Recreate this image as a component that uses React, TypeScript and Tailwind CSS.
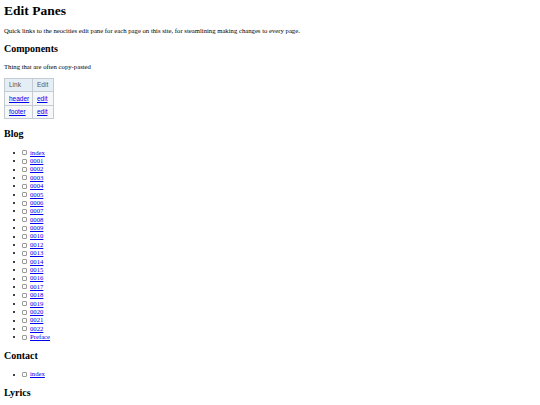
import React from "react";

const blog = ["index","0001","0002","0003","0004","0005","0006","0007","0008","0009","0010","0012","0013","0014","0015","0016","0017","0018","0019","0020","0021","0022","Preface"];

function Item({ label }: { label: string }) {
  return (
    <li className="flex items-center h-[8.4px] leading-[8.4px]">
      <span className="w-[2px] h-[2px] rounded-full bg-black ml-[-7px] mr-[5px]" />
      <span className="inline-block w-[5px] h-[5px] border border-[#9a9a9a] rounded-[1px] bg-white ml-[2px] mr-[3px]" />
      <a href="#" className="text-[#0000ee] underline">{label}</a>
    </li>
  );
}

export default function App() {
  return (
    <div className="bg-white h-[405px] overflow-hidden px-[4px] text-black text-[6.7px] antialiased" style={{ fontFamily: '"Liberation Serif", "Times New Roman", serif' }}>
      <h1 className="text-[13.5px] leading-[18px] font-bold pt-[2px]">Edit Panes</h1>
      <p className="leading-[10px] mt-[5.7px]">Quick links to the neocities edit pane for each page on this site, for steamlining making changes to every page.</p>
      <h2 className="text-[10px] leading-[14px] font-bold mt-[6.2px]">Components</h2>
      <p className="leading-[10px] mt-[5.8px]">Thing that are often copy-pasted</p>
      <table className="mt-[6.3px] border-collapse border border-[#a2a9b1] text-[6.5px] text-[#222]" style={{ fontFamily: '"Liberation Sans", Arial, sans-serif' }}>
        <thead>
          <tr className="h-[13.5px] bg-[#e5eef5]">
            <th className="border border-[#c4cbd2] font-normal text-left pl-[4px] pr-[4px] w-[28px] text-[#555]">Link</th>
            <th className="border border-[#c4cbd2] font-normal text-left pl-[4px] pr-[3px] w-[21px] text-[#555]">Edit</th>
          </tr>
        </thead>
        <tbody className="bg-[#f6f7f9]">
          <tr className="h-[13.3px]">
            <td className="border border-[#c4cbd2] pl-[4px]"><a href="#" className="text-[#0000ee] underline">header</a></td>
            <td className="border border-[#c4cbd2] pl-[4px]"><a href="#" className="text-[#0000ee] underline">edit</a></td>
          </tr>
          <tr className="h-[13.3px]">
            <td className="border border-[#c4cbd2] pl-[4px]"><a href="#" className="text-[#0000ee] underline">footer</a></td>
            <td className="border border-[#c4cbd2] pl-[4px]"><a href="#" className="text-[#0000ee] underline">edit</a></td>
          </tr>
        </tbody>
      </table>
      <h2 className="text-[10px] leading-[14px] font-bold mt-[7.9px]">Blog</h2>
      <ul className="pl-[16px] mt-[7.6px]">
        {blog.map((b) => <Item key={b} label={b} />)}
      </ul>
      <h2 className="text-[10px] leading-[14px] font-bold mt-[7.2px]">Contact</h2>
      <ul className="pl-[16px] mt-[7.6px]">
        <Item label="index" />
      </ul>
      <h2 className="text-[10px] leading-[14px] font-bold mt-[7px]">Lyrics</h2>
    </div>
  );
}
